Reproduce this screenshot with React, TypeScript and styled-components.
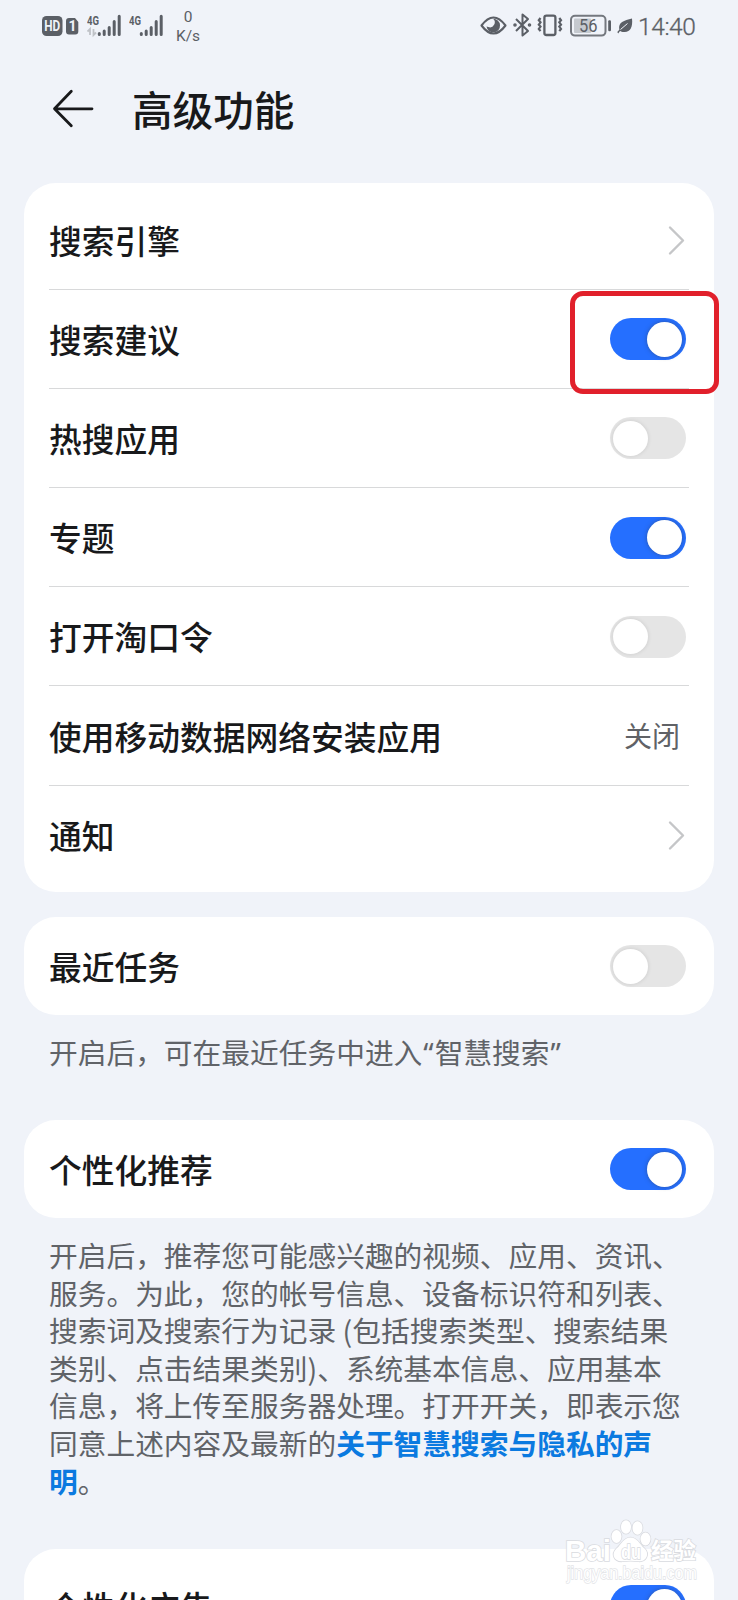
import React from 'react';
import styled, { createGlobalStyle } from 'styled-components';

const GlobalStyle = createGlobalStyle`
  * { box-sizing: border-box; }
  html, body { margin: 0; padding: 0; background: #f0f3f9; }
  body { width: 738px; height: 1600px; overflow: hidden; }
`;

const INK = '#5b5f66';

const Screen = styled.div`
  position: relative;
  width: 738px;
  height: 1600px;
  overflow: hidden;
  background: #f0f3f9;
  color: #18191b;
  font-family: 'Noto Sans CJK SC', sans-serif;
`;

const StatusBar = styled.header`
  height: 52px;
  display: flex;
  justify-content: space-between;
  padding: 0 42px;
  color: ${INK};
`;

const StatusGroup = styled.div`
  display: flex;
  align-items: flex-start;
`;

const StatusIcon = styled.svg<{ $gap?: number }>`
  display: block;
  flex: none;
  margin-left: ${(p) => p.$gap ?? 0}px;
  font-family: Roboto, sans-serif;
`;

const NetSpeed = styled.div`
  width: 30px;
  margin-left: 8px;
  padding-top: 8px;
  font: 15.5px/18.5px Roboto, sans-serif;
  text-align: center;
  white-space: nowrap;
`;

const Clock = styled.div`
  margin-left: 5px;
  padding-top: 12px;
  width: 58px;
  font: 300 24.5px/30px Roboto, sans-serif;
  letter-spacing: -0.4px;
  -webkit-text-stroke: 0.3px ${INK};
  white-space: nowrap;
`;

const TitleBar = styled.div`
  height: 130.5px;
  display: flex;
  align-items: flex-start;
  padding: 30px 0 0 52px;
`;

const BackIcon = styled.svg`
  display: block;
  margin-top: 6px;
  width: 44px;
  height: 42px;
`;

const Title = styled.h1`
  margin: 0 0 0 36px;
  font-size: 40.6px;
  line-height: 54px;
  font-weight: 500;
`;

const Card = styled.section<{ $padded?: boolean; $gap?: number }>`
  margin: ${(p) => p.$gap ?? 0}px 24px 0;
  padding: ${(p) => (p.$padded ? '8px 25px 7px' : '0 25px')};
  background: #fff;
  border-radius: 32px;
`;

const Row = styled.div<{ $line?: boolean }>`
  position: relative;
  height: ${(p) => (p.$line === undefined ? 98.5 : 99.2)}px;
  display: flex;
  align-items: center;
  justify-content: space-between;
  border-bottom: ${(p) => (p.$line ? '1px solid #d8d9da' : '0')};
`;

const Label = styled.span`
  font-size: 32.75px;
  line-height: 48px;
  font-weight: 500;
  white-space: nowrap;
`;

const Value = styled.span`
  margin: -2px 9px 0 0;
  font-size: 28px;
  line-height: 40px;
  color: #606266;
`;

const Track = styled.span<{ $on?: boolean }>`
  width: 76px;
  height: 42px;
  margin: 1px 3.5px 0 0;
  padding: 3.5px;
  display: flex;
  justify-content: ${(p) => (p.$on ? 'flex-end' : 'flex-start')};
  border-radius: 21px;
  background: ${(p) => (p.$on ? '#256fff' : '#e5e5e5')};
`;

const Knob = styled.span<{ $on?: boolean }>`
  width: 35px;
  height: 35px;
  border-radius: 50%;
  background: #fff;
  box-shadow: 0 0 4px ${(p) => (p.$on ? 'rgba(50, 60, 80, .5)' : 'rgba(0, 0, 0, .12)')};
`;

const ChevronIcon = styled.svg`
  display: block;
  width: 18px;
  height: 32px;
  margin-right: 4.5px;
`;

const Highlight = styled.span`
  position: absolute;
  right: -30px;
  top: 1.5px;
  width: 149.5px;
  height: 103px;
  border: 5px solid #e1202b;
  border-radius: 13px;
  z-index: 1;
`;

const Note = styled.p<{ $height: number }>`
  height: ${(p) => p.$height}px;
  margin: 0;
  padding: 18px 0 0 49px;
  font-size: 28.72px;
  line-height: 37.6px;
  color: #606368;
  white-space: nowrap;
`;

const NoteLine = styled.span`
  display: block;
`;

const Quote = styled.span`
  padding: 0 1px;
  font-family: 'Noto Sans', sans-serif;
`;

const Link = styled.a`
  color: #0b7ae0;
  font-weight: 700;
`;

const Watermark = styled.svg`
  position: absolute;
  left: 560px;
  top: 1515px;
  width: 146px;
  height: 75px;
`;

const Toggle = ({ on }: { on?: boolean }) => (
  <Track $on={on} role="switch" aria-checked={!!on}>
    <Knob $on={on} />
  </Track>
);

const Chevron = () => (
  <ChevronIcon viewBox="0 0 18 32" fill="none" stroke="#c5c6c8" strokeWidth="2.4" strokeLinecap="round" strokeLinejoin="round">
    <path d="M3 3.5 16 16.5 3 29.5" />
  </ChevronIcon>
);

const Signal = ({ gap, data }: { gap: number; data?: boolean }) => (
  <StatusIcon $gap={gap} width="36" height="52">
    <text x="0" y="24.5" fontSize="13" fontWeight="700" fill={INK} textLength="12" lengthAdjust="spacingAndGlyphs">4G</text>
    {data && <path d="M3 35V29l-2.5 2.5M6.5 29v6l2.5-2.5" fill="none" stroke="#bfc2c7" strokeWidth="1.8" />}
    <path d="M12.3 33.5v1M17.2 31v3.5M22.2 27.5v7M27.2 21.5v13M32.2 16.2v18.3" stroke={INK} strokeWidth="3" strokeLinecap="round" />
  </StatusIcon>
);

type Item = { label: string; kind: 'link' | 'on' | 'off' | 'value'; marked?: boolean };

const items: Item[] = [
  { label: '搜索引擎', kind: 'link' },
  { label: '搜索建议', kind: 'on', marked: true },
  { label: '热搜应用', kind: 'off' },
  { label: '专题', kind: 'on' },
  { label: '打开淘口令', kind: 'off' },
  { label: '使用移动数据网络安装应用', kind: 'value' },
  { label: '通知', kind: 'link' },
];

const privacyLines = [
  '开启后，推荐您可能感兴趣的视频、应用、资讯、',
  '服务。为此，您的帐号信息、设备标识符和列表、',
  '搜索词及搜索行为记录 (包括搜索类型、搜索结果',
  '类别、点击结果类别)、系统基本信息、应用基本',
  '信息，将上传至服务器处理。打开开关，即表示您',
];

export default function App() {
  return (
    <Screen>
      <GlobalStyle />
      <StatusBar>
        <StatusGroup>
          <StatusIcon width="21" height="52">
            <rect x="0" y="16" width="20.5" height="20" rx="4.5" fill={INK} />
            <text x="2.2" y="31" fontSize="14" fontWeight="700" fill="#f0f3f9" textLength="16" lengthAdjust="spacingAndGlyphs">HD</text>
          </StatusIcon>
          <StatusIcon $gap={3} width="13" height="52">
            <path d="M3 18h6l3.3 4v9.5a3 3 0 0 1-3 3H3a3 3 0 0 1-3-3V21a3 3 0 0 1 3-3z" fill={INK} />
            <text x="2.4" y="31.3" fontSize="14" fontWeight="700" fill="#f0f3f9">1</text>
          </StatusIcon>
          <Signal gap={8} data />
          <Signal gap={6} />
          <NetSpeed>0<br />K/s</NetSpeed>
        </StatusGroup>
        <StatusGroup>
          <StatusIcon width="27" height="52" viewBox="0 0 27 52">
            <path d="M1.5 25.5Q13.5 9.5 25.5 25.5 13.5 41.5 1.5 25.5z" fill="none" stroke={INK} strokeWidth="2.1" strokeLinejoin="round" />
            <path d="M13 18.8a6.8 6.8 0 1 1-6.5 7.8l1.8.4A4.8 4.8 0 0 0 13 18.8z" fill={INK} />
          </StatusIcon>
          <StatusIcon $gap={6} width="19" height="52" fill="none" stroke={INK} strokeWidth="2">
            <path d="M3 19l12 12-5.5 4.5v-21L15 19 3 31" strokeLinejoin="round" />
            <circle cx="2" cy="25" r=".8" />
            <circle cx="16.5" cy="25" r=".8" />
          </StatusIcon>
          <StatusIcon $gap={5} width="26" height="52" fill="none" stroke={INK}>
            <rect x="7.4" y="15.6" width="11" height="19.4" rx="2" strokeWidth="2.3" />
            <path d="M3.5 18l-1.7 2.3 1.7 2-1.7 2.3 1.7 2-1.7 2.3 1.7 2.3M22.3 18l1.7 2.3-1.7 2 1.7 2.3-1.7 2 1.7 2.3-1.7 2.3" strokeWidth="2.2" />
          </StatusIcon>
          <StatusIcon $gap={7} width="42" height="52">
            <rect x="4" y="18.5" width="17" height="14.5" rx="1" fill="#c5c9cf" />
            <rect x="1" y="15.8" width="34.5" height="19.8" rx="4" fill="none" stroke="#74787f" strokeWidth="2" />
            <rect x="38.2" y="20.3" width="2.8" height="11" rx="1.2" fill={INK} />
            <text x="9" y="32" fontSize="17.5" fill={INK} textLength="18.5" lengthAdjust="spacingAndGlyphs">56</text>
          </StatusIcon>
          <StatusIcon $gap={5} width="16" height="52">
            <path d="M15 18.5c1 9-2 14-8 13.5-2 0-3-.5-4-1L1.2 33.5.3 32l2-2.3C1 22 7 20.5 15 18.5z" fill={INK} />
            <path d="M3.5 29.5L10.5 23.5" stroke="#f0f3f9" strokeWidth="1" />
          </StatusIcon>
          <Clock>14:40</Clock>
        </StatusGroup>
      </StatusBar>

      <TitleBar>
        <BackIcon viewBox="0 0 44 42" fill="none" stroke="#18191b" strokeWidth="2.8" strokeLinecap="round" strokeLinejoin="round">
          <path d="M40 20.8H2.5M19.3 3.3L2.5 20.8 19.3 37.8" />
        </BackIcon>
        <Title>高级功能</Title>
      </TitleBar>

      <Card $padded>
        {items.map((item, i) => (
          <Row key={item.label} $line={i < items.length - 1}>
            <Label>{item.label}</Label>
            {item.kind === 'link' && <Chevron />}
            {item.kind === 'value' && <Value>关闭</Value>}
            {(item.kind === 'on' || item.kind === 'off') && <Toggle on={item.kind === 'on'} />}
            {item.marked && <Highlight />}
          </Row>
        ))}
      </Card>

      <Card $gap={24.8}>
        <Row>
          <Label>最近任务</Label>
          <Toggle />
        </Row>
      </Card>
      <Note $height={104.5}>
        开启后，可在最近任务中进入<Quote>“</Quote>智慧搜索<Quote>”</Quote>
      </Note>

      <Card>
        <Row>
          <Label>个性化推荐</Label>
          <Toggle on />
        </Row>
      </Card>
      <Note $height={330.5}>
        {privacyLines.map((line) => (
          <NoteLine key={line}>{line}</NoteLine>
        ))}
        <NoteLine>同意上述内容及最新的<Link>关于智慧搜索与隐私的声</Link></NoteLine>
        <NoteLine><Link>明</Link>。</NoteLine>
      </Note>

      <Card $padded>
        <Row>
          <Label>个性化广告</Label>
          <Toggle on />
        </Row>
      </Card>

      <Watermark viewBox="0 0 146 75" fill="#fff" stroke="#d9dbe0" strokeWidth="1.6" paintOrder="stroke" fontFamily="'Liberation Sans', 'Noto Sans CJK SC', sans-serif">
        <text x="5" y="45.5" fontSize="29" fontWeight="700" textLength="46" lengthAdjust="spacingAndGlyphs">Bai</text>
        <ellipse cx="56.5" cy="21.5" rx="5" ry="6.5" />
        <ellipse cx="66" cy="12" rx="5" ry="6.8" />
        <ellipse cx="77.5" cy="13" rx="5" ry="6.8" />
        <ellipse cx="85.5" cy="24" rx="5" ry="6.5" />
        <path d="M70.5 22.5c7 0 9 7 14 11 6 6 1 13.5-6 12.8-6-.8-10-.8-16 0-8 .7-12-7-6-12.8 5-4 7-11 14-11z" />
        <text x="61" y="44" fontSize="20" fontWeight="700" textLength="20" lengthAdjust="spacingAndGlyphs">du</text>
        <text x="91" y="43.5" fontSize="22.5" fontWeight="700" fontFamily="'Noto Sans CJK SC', sans-serif">经验</text>
        <text x="7" y="63.5" fontSize="17.5" strokeWidth="1.4" opacity="0.75" textLength="130" lengthAdjust="spacingAndGlyphs">jingyan.baidu.com</text>
      </Watermark>
    </Screen>
  );
}
